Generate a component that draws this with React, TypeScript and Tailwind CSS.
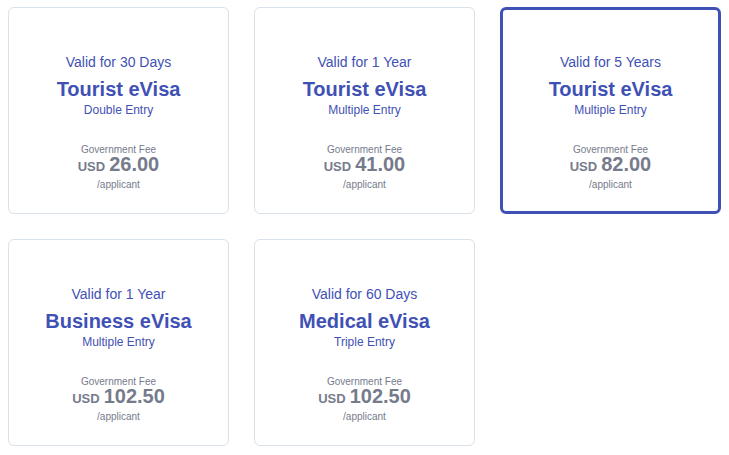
const visas = [
  { validity: "Valid for 30 Days", name: "Tourist eVisa", entry: "Double Entry", fee: "26.00" },
  { validity: "Valid for 1 Year", name: "Tourist eVisa", entry: "Multiple Entry", fee: "41.00" },
  { validity: "Valid for 5 Years", name: "Tourist eVisa", entry: "Multiple Entry", fee: "82.00", selected: true },
  { validity: "Valid for 1 Year", name: "Business eVisa", entry: "Multiple Entry", fee: "102.50" },
  { validity: "Valid for 60 Days", name: "Medical eVisa", entry: "Triple Entry", fee: "102.50" },
];

const VisaCard = ({ validity, name, entry, fee, selected }: any) => (
  <div
    className={
      selected
        ? "h-[207px] rounded-[6px] border-[3px] border-[#3f51b5] bg-white flex flex-col items-center pt-[43px]"
        : "h-[207px] rounded-[6px] border border-[#d9e1ea] bg-white flex flex-col items-center pt-[45px]"
    }
  >
    <div className="text-[14px] leading-[18px] text-[#3f51b5]">{validity}</div>
    <div className="mt-[6px] text-[20px] leading-[24px] font-bold text-[#3f51b5]">{name}</div>
    <div className="mt-[1px] text-[12px] leading-[16px] text-[#3f51b5]">{entry}</div>
    <div className="mt-[26px] text-[10px] leading-[12px] text-[#767b8c]">Government Fee</div>
    <div className="flex items-baseline gap-[4px] leading-[16px] text-[#767b8c] font-bold">
      <span className="text-[13px]">USD</span>
      <span className="text-[20px]">{fee}</span>
    </div>
    <div className="mt-[4px] text-[10px] leading-[12px] text-[#767b8c]">/applicant</div>
  </div>
);

export default function App() {
  return (
    <div className="min-h-screen bg-white pt-[7px] pl-[8px] font-[family-name:Liberation_Sans,Arial,sans-serif]">
      <div className="grid grid-cols-[221px_221px_221px] gap-[25px]">
        {visas.map((v, i) => (
          <VisaCard key={i} {...v} />
        ))}
      </div>
    </div>
  );
}
